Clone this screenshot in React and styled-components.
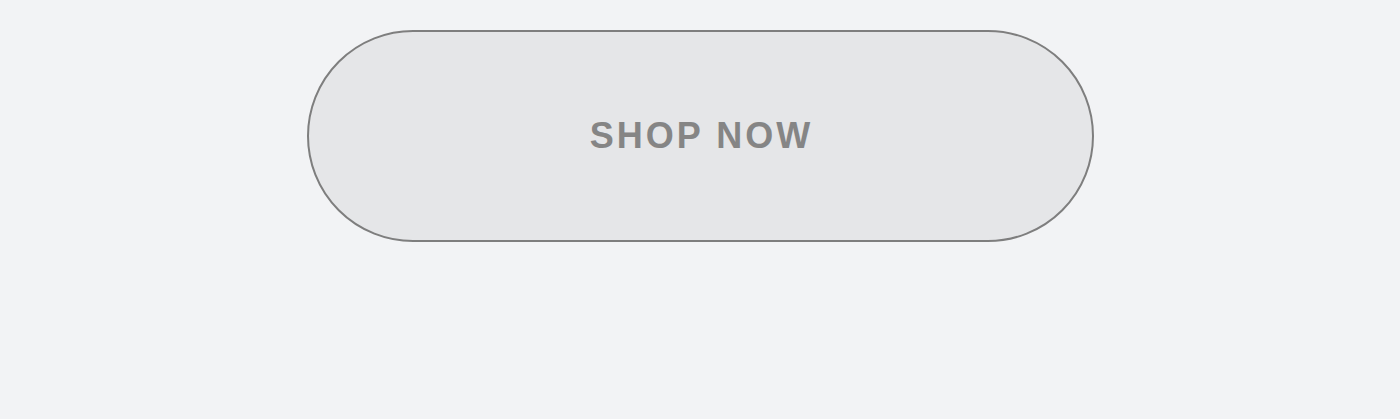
import React from "react";
import styled, { createGlobalStyle } from "styled-components";

const GlobalStyle = createGlobalStyle`
  html, body {
    margin: 0;
    padding: 0;
    background: #f2f3f5;
  }
`;

const Page = styled.div`
  display: flex;
  justify-content: center;
  padding-top: 30px;
  min-height: 419px;
  box-sizing: border-box;
  font-family: "Liberation Sans", Arial, sans-serif;
`;

const PillButton = styled.button`
  width: 787px;
  height: 212px;
  padding: 0 0 0 3px;
  border: 2px solid #7e7e7e;
  border-radius: 106px;
  background: #e5e6e8;
  color: #858585;
  font-family: inherit;
  font-size: 36px;
  font-weight: 700;
  letter-spacing: 3px;
  text-transform: uppercase;
  cursor: pointer;
  display: flex;
  align-items: center;
  justify-content: center;
  box-sizing: border-box;
`;

const App = () => {
  return (
    <>
      <GlobalStyle />
      <Page>
        <PillButton>Shop Now</PillButton>
      </Page>
    </>
  );
};

export default App;
